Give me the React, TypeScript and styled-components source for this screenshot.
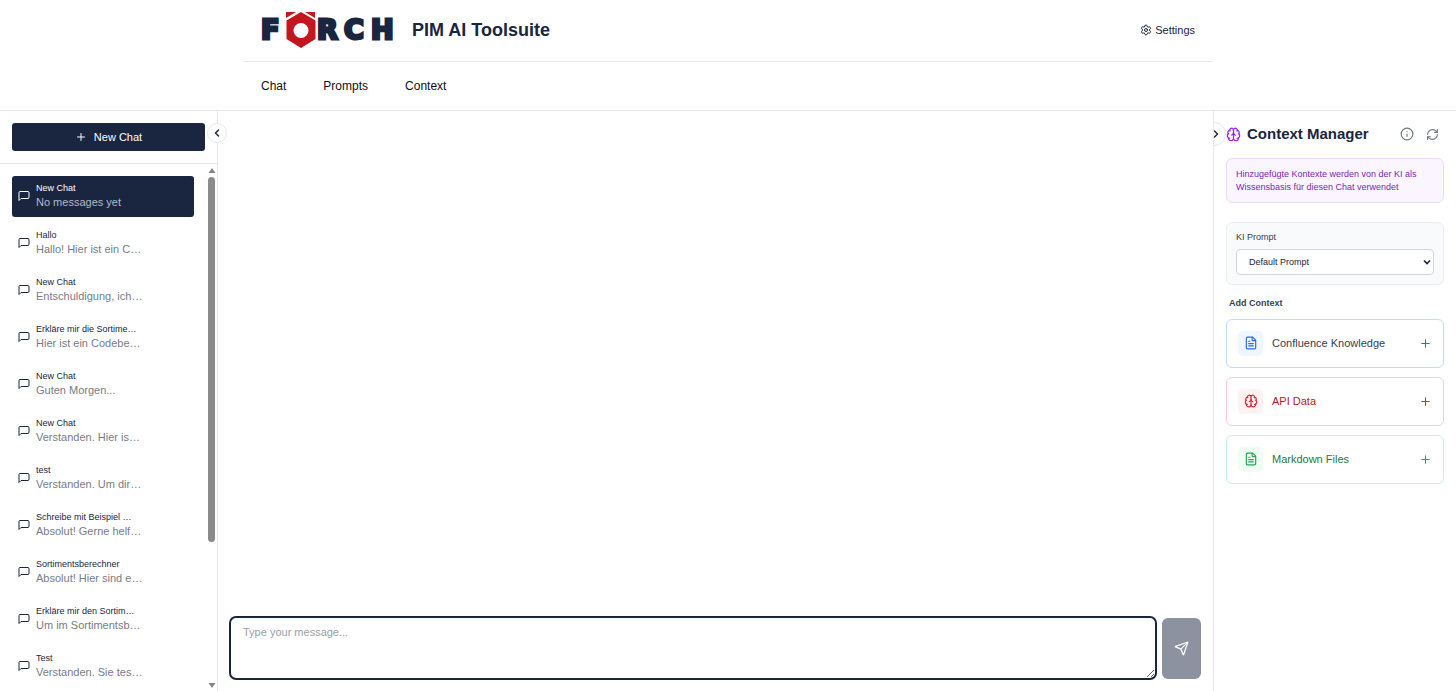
import React from "react";
import styled, { createGlobalStyle } from "styled-components";
import {
  Brain,
  ChevronLeft,
  ChevronRight,
  FileText,
  Info,
  Plus,
  RefreshCw,
  Send,
  Settings,
} from "lucide-react";

const navy = "#1a2540";
const line = "#e5e7eb";

const GlobalStyle = createGlobalStyle`
  *, *::before, *::after { box-sizing: border-box; }
  body {
    margin: 0;
    background: #fff;
    color: ${navy};
    font-family: "Liberation Sans", Arial, sans-serif;
    font-size: 11px;
  }
  button, select, textarea { font: inherit; color: inherit; }
  button { cursor: pointer; }
  svg { flex: none; display: block; }
`;

const Page = styled.div`
  display: flex;
  flex-direction: column;
  height: 100vh;
  overflow: hidden;
`;

const Header = styled.header`
  border-bottom: 1px solid ${line};
`;

const HeaderInner = styled.div`
  max-width: 968px;
  margin: 0 auto;
`;

const Brand = styled.div`
  display: flex;
  align-items: center;
  gap: 15px;
  height: 62px;
  padding: 0 17px 2px;
  border-bottom: 1px solid ${line};
`;

const Title = styled.h1`
  margin: 0;
  flex: 1;
  font-size: 18px;
  line-height: 24px;
`;

const SettingsButton = styled.button`
  display: flex;
  align-items: center;
  gap: 3px;
  padding: 0;
  border: 0;
  background: none;
`;

const Nav = styled.nav`
  display: flex;
  gap: 37px;
  height: 48px;
  align-items: center;
  padding: 0 17px 1px;
`;

const NavLink = styled.a`
  color: #0f0f12;
  font-size: 12px;
  text-decoration: none;
`;

const Body = styled.div`
  display: flex;
  flex: 1;
  min-height: 0;
`;

const Sidebar = styled.aside`
  position: relative;
  display: flex;
  flex-direction: column;
  flex: 0 0 218px;
  border-right: 1px solid ${line};
`;

const NewChatArea = styled.div`
  padding: 12px;
  border-bottom: 1px solid ${line};
`;

const NewChatButton = styled.button`
  display: flex;
  align-items: center;
  justify-content: center;
  gap: 7px;
  width: 100%;
  height: 28px;
  padding: 0 0 1px;
  border: 0;
  border-radius: 3px;
  background: ${navy};
  color: #fff;
`;

const CollapseButton = styled.button`
  position: absolute;
  z-index: 1;
  top: 12px;
  right: -10px;
  display: grid;
  place-items: center;
  width: 20px;
  height: 20px;
  padding: 0;
  border: 1px solid ${line};
  border-radius: 50%;
  background: #fff;
`;

const ListArea = styled.div`
  display: flex;
  flex: 1;
  min-height: 0;
`;

const ChatList = styled.ul`
  display: flex;
  flex: 1;
  flex-direction: column;
  gap: 6px;
  min-width: 0;
  margin: 0;
  padding: 12px;
  overflow: hidden;
  list-style: none;
`;

const ChatItem = styled.button<{ $active: boolean }>`
  display: flex;
  align-items: center;
  gap: 6px;
  width: 100%;
  height: 41px;
  padding: 0 6px 2px;
  border: 0;
  border-radius: 3px;
  background: ${(p) => (p.$active ? navy : "transparent")};
  color: ${(p) => (p.$active ? "#fff" : navy)};
  text-align: left;
`;

const ChatText = styled.span`
  display: flex;
  flex-direction: column;
`;

const ChatTitle = styled.span`
  font-size: 9px;
  line-height: 14px;
`;

const ChatPreview = styled.span<{ $active: boolean }>`
  font-size: 11px;
  line-height: 15px;
  color: ${(p) => (p.$active ? "#b6bbc7" : "#777c86")};
`;

const ScrollTrack = styled.div`
  display: flex;
  flex-direction: column;
  align-items: center;
  width: 11px;
  padding: 3px 0 2px;
`;

const ScrollThumb = styled.div`
  width: 7px;
  height: 70%;
  margin: 3px 0 auto;
  border-radius: 4px;
  background: #8b8b8b;
`;

const Main = styled.main`
  display: flex;
  flex: 1;
  flex-direction: column;
  justify-content: flex-end;
  min-width: 0;
`;

const Composer = styled.form`
  display: flex;
  align-items: center;
  gap: 5px;
  padding: 11px 12px 11px 11px;
`;

const MessageBox = styled.textarea`
  display: block;
  flex: 1;
  height: 64px;
  padding: 7px 12px;
  border: 2px solid ${navy};
  border-radius: 7px;
  outline: 0;
  background: #fff;
  line-height: 15px;
  resize: vertical;
  &::placeholder { color: #9b9ea5; opacity: 1; }
`;

const SendButton = styled.button`
  display: grid;
  place-items: center;
  width: 39px;
  height: 61px;
  padding: 0;
  border: 0;
  border-radius: 6px;
  background: #8c929f;
  color: #fff;
`;

const Panel = styled.aside`
  position: relative;
  display: flex;
  flex-direction: column;
  flex: 0 0 243px;
  padding: 12px;
  overflow: hidden;
  border-left: 1px solid ${line};
`;

const PanelToggle = styled(CollapseButton)`
  top: 11px;
  right: auto;
  left: -12px;
  width: 24px;
  height: 24px;
  padding-left: 4px;
`;

const PanelHeader = styled.div`
  position: relative;
  z-index: 2;
  display: flex;
  align-items: center;
  gap: 6px;
  height: 22px;
  margin-bottom: 13px;
  padding-right: 5px;
`;

const PanelTitle = styled.h2`
  flex: 1;
  margin: 0;
  font-size: 15px;
  line-height: 20px;
`;

const IconButton = styled.button`
  padding: 0;
  margin-left: 6px;
  border: 0;
  background: none;
  color: #71757d;
`;

const Notice = styled.p`
  margin: 0 0 19px;
  padding: 9px 9px 8px;
  border: 1px solid #e9dcfd;
  border-radius: 6px;
  background: #faf5ff;
  color: #7a1fb5;
  font-size: 9px;
  line-height: 13px;
`;

const PromptCard = styled.div`
  display: flex;
  flex-direction: column;
  gap: 5px;
  height: 63px;
  padding: 7px 9px 10px;
  border: 1px solid #eceef1;
  border-radius: 6px;
  background: #f9fafb;
`;

const PromptLabel = styled.label`
  color: #374151;
  font-size: 9px;
  line-height: 14px;
`;

const SelectWrap = styled.div`
  display: grid;
  align-items: center;
  > * { grid-area: 1 / 1; }
  > svg { justify-self: end; margin-right: 2px; pointer-events: none; }
`;

const PromptSelect = styled.select`
  width: 100%;
  height: 26px;
  padding: 0 12px;
  border: 1px solid #d1d5db;
  border-radius: 4px;
  background: #fff;
  font-size: 9px;
  appearance: none;
`;

const SectionTitle = styled.h3`
  margin: 11px 3px 9px;
  color: #374151;
  font-size: 9px;
  line-height: 14px;
`;

const Sources = styled.div`
  display: flex;
  flex-direction: column;
  gap: 9px;
`;

const SourceCard = styled.button<{ $border: string; $text: string }>`
  display: flex;
  align-items: center;
  gap: 9px;
  height: 49px;
  padding: 0 11px 1px;
  border: 1px solid ${(p) => p.$border};
  border-radius: 6px;
  background: #fff;
  color: ${(p) => p.$text};
  text-align: left;
`;

const SourceIcon = styled.span<{ $tint: string; $color: string }>`
  display: grid;
  place-items: center;
  width: 25px;
  height: 25px;
  border-radius: 5px;
  background: ${(p) => p.$tint};
  color: ${(p) => p.$color};
`;

const SourceName = styled.span`
  flex: 1;
`;

function ChatIcon() {
  return (
    <svg width="12" height="12" viewBox="0 0 24 24" fill="none" stroke="currentColor" strokeWidth="2" strokeLinecap="round" strokeLinejoin="round">
      <path d="M22 15a2 2 0 0 1-2 2H6l-4 4V5a2 2 0 0 1 2-2h16a2 2 0 0 1 2 2z" />
    </svg>
  );
}

const chats = [
  ["New Chat", "No messages yet"],
  ["Hallo", "Hallo! Hier ist ein C…"],
  ["New Chat", "Entschuldigung, ich…"],
  ["Erkläre mir die Sortime…", "Hier ist ein Codebe…"],
  ["New Chat", "Guten Morgen..."],
  ["New Chat", "Verstanden. Hier is…"],
  ["test", "Verstanden. Um dir…"],
  ["Schreibe mit Beispiel …", "Absolut! Gerne helf…"],
  ["Sortimentsberechner", "Absolut! Hier sind e…"],
  ["Erkläre mir den Sortim…", "Um im Sortimentsb…"],
  ["Test", "Verstanden. Sie tes…"],
];

const sources = [
  { name: "Confluence Knowledge", icon: FileText, border: "#c3dafc", text: "#374151", tint: "#eff6ff", color: "#2f6ae8" },
  { name: "API Data", icon: Brain, border: "#fccdd0", text: "#b3202c", tint: "#fef2f2", color: "#dc2630" },
  { name: "Markdown Files", icon: FileText, border: "#c3f3d5", text: "#1b7a41", tint: "#f0fdf4", color: "#22a74f" },
];

function Logo() {
  return (
    <svg width="136" height="38" viewBox="0 0 136 38" role="img" aria-label="Förch">
      <g fill={navy} stroke={navy} strokeWidth="3" fontFamily="DejaVu Sans" fontWeight="700" fontSize="27">
        <text x="0" y="28">F</text>
        <text x="56" y="28">R</text>
        <text x="83" y="28">C</text>
        <text x="110" y="28">H</text>
      </g>
      <path d="M25 1h10l-10 6zM54 1H44l10 6z" fill="#c4161f" />
      <path
        d="M40 1 54.500 9.500v18.500L40 37 25.500 28V9.500zM40 12a7.500 7.500 0 1 0 0 15a7.500 7.500 0 1 0 0-15z"
        fill="#c4161f"
        fillRule="evenodd"
      />
    </svg>
  );
}

export default function App() {
  return (
    <Page>
      <GlobalStyle />
      <Header>
        <HeaderInner>
          <Brand>
            <Logo />
            <Title>PIM AI Toolsuite</Title>
            <SettingsButton type="button">
              <Settings size={12} />
              Settings
            </SettingsButton>
          </Brand>
          <Nav>
            <NavLink href="#chat">Chat</NavLink>
            <NavLink href="#prompts">Prompts</NavLink>
            <NavLink href="#context">Context</NavLink>
          </Nav>
        </HeaderInner>
      </Header>
      <Body>
        <Sidebar>
          <NewChatArea>
            <NewChatButton type="button">
              <Plus size={12} />
              New Chat
            </NewChatButton>
          </NewChatArea>
          <CollapseButton type="button" aria-label="Collapse chat list">
            <ChevronLeft size={12} strokeWidth={3} />
          </CollapseButton>
          <ListArea>
            <ChatList>
              {chats.map(([title, preview], i) => (
                <li key={i}>
                  <ChatItem type="button" $active={i === 0}>
                    <ChatIcon />
                    <ChatText>
                      <ChatTitle>{title}</ChatTitle>
                      <ChatPreview $active={i === 0}>{preview}</ChatPreview>
                    </ChatText>
                  </ChatItem>
                </li>
              ))}
            </ChatList>
            <ScrollTrack aria-hidden="true">
              <svg width="8" height="7" viewBox="0 0 8 7"><path d="M4 1 7.500 6h-7z" fill="#858585" /></svg>
              <ScrollThumb />
              <svg width="8" height="7" viewBox="0 0 8 7"><path d="M4 6 7.500 1h-7z" fill="#858585" /></svg>
            </ScrollTrack>
          </ListArea>
        </Sidebar>
        <Main>
          <Composer onSubmit={(e) => e.preventDefault()}>
            <MessageBox aria-label="Message" placeholder="Type your message..." autoFocus />
            <SendButton type="submit" aria-label="Send">
              <Send size={15} />
            </SendButton>
          </Composer>
        </Main>
        <Panel>
          <PanelToggle type="button" aria-label="Collapse context manager">
            <ChevronRight size={12} strokeWidth={3} />
          </PanelToggle>
          <PanelHeader>
            <Brain size={15} color="#9a26ea" />
            <PanelTitle>Context Manager</PanelTitle>
            <IconButton type="button" aria-label="Info">
              <Info size={14} />
            </IconButton>
            <IconButton type="button" aria-label="Refresh">
              <RefreshCw size={13} />
            </IconButton>
          </PanelHeader>
          <Notice>Hinzugefügte Kontexte werden von der KI als Wissensbasis für diesen Chat verwendet</Notice>
          <PromptCard>
            <PromptLabel htmlFor="prompt">KI Prompt</PromptLabel>
            <SelectWrap>
              <PromptSelect id="prompt">
                <option>Default Prompt</option>
              </PromptSelect>
              <svg width="10" height="8" viewBox="0 0 10 8">
                <path d="m2 2.500 3 3 3-3" fill="none" stroke={navy} strokeWidth="1.700" />
              </svg>
            </SelectWrap>
          </PromptCard>
          <SectionTitle>Add Context</SectionTitle>
          <Sources>
            {sources.map(({ name, icon: Icon, border, text, tint, color }) => (
              <SourceCard key={name} type="button" $border={border} $text={text}>
                <SourceIcon $tint={tint} $color={color}>
                  <Icon size={14} />
                </SourceIcon>
                <SourceName>{name}</SourceName>
                <Plus size={13} color={color} />
              </SourceCard>
            ))}
          </Sources>
        </Panel>
      </Body>
    </Page>
  );
}
